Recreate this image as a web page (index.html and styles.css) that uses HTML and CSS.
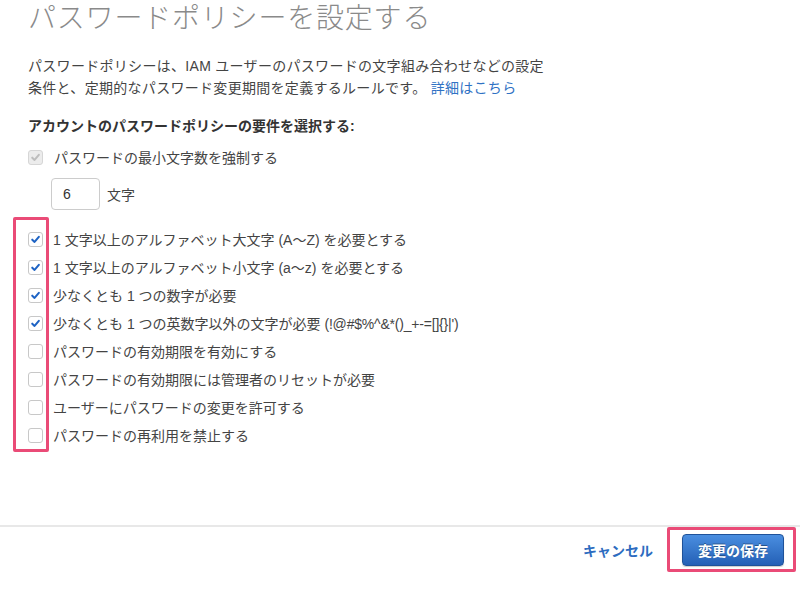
FILE: index.html
```html
<!DOCTYPE html>
<html lang="ja">
<head>
  <meta charset="UTF-8" />
  <title>パスワードポリシーを設定する</title>
  <link rel="stylesheet" href="styles.css">
</head>
<body>

  <div class="page">
    <h1>パスワードポリシーを設定する</h1>

    <p class="intro">パスワードポリシーは、IAM ユーザーのパスワードの文字組み合わせなどの設定<br>条件と、定期的なパスワード変更期間を定義するルールです。 <a href="#">詳細はこちら</a></p>

    <h2>アカウントのパスワードポリシーの要件を選択する:</h2>

    <label class="row">
      <span class="cb disabled"><svg viewBox="0 0 14 14"><path d="M3.5 7.2 L6 9.6 L10.6 4.2" /></svg></span>
      <span>パスワードの最小文字数を強制する</span>
    </label>

    <div class="minlen">
      <input type="text" value="6" />
      <span>文字</span>
    </div>

    <div class="options">
      <span class="mark"></span>
      <label class="row"><span class="cb on"><svg viewBox="0 0 14 14"><path d="M3.5 7.2 L6 9.6 L10.6 4.2" /></svg></span><span>1 文字以上のアルファベット大文字 (A〜Z) を必要とする</span></label>
      <label class="row"><span class="cb on"><svg viewBox="0 0 14 14"><path d="M3.5 7.2 L6 9.6 L10.6 4.2" /></svg></span><span>1 文字以上のアルファベット小文字 (a〜z) を必要とする</span></label>
      <label class="row"><span class="cb on"><svg viewBox="0 0 14 14"><path d="M3.5 7.2 L6 9.6 L10.6 4.2" /></svg></span><span>少なくとも 1 つの数字が必要</span></label>
      <label class="row"><span class="cb on"><svg viewBox="0 0 14 14"><path d="M3.5 7.2 L6 9.6 L10.6 4.2" /></svg></span><span>少なくとも 1 つの英数字以外の文字が必要 <span class="sym">(!@#$%^&amp;*()_+-=[]{}|')</span></span></label>
      <label class="row"><span class="cb"></span><span>パスワードの有効期限を有効にする</span></label>
      <label class="row"><span class="cb"></span><span>パスワードの有効期限には管理者のリセットが必要</span></label>
      <label class="row"><span class="cb"></span><span>ユーザーにパスワードの変更を許可する</span></label>
      <label class="row"><span class="cb"></span><span>パスワードの再利用を禁止する</span></label>
    </div>
  </div>

  <div class="footer">
    <a href="#" class="cancel">キャンセル</a>
    <span class="save-wrap">
      <span class="mark"></span>
      <button class="save">変更の保存</button>
    </span>
  </div>

</body>
</html>
```

FILE: styles.css
```css
html,body{margin:0;padding:0;background:#fff;}
body{font-family:"Liberation Sans","Noto Sans CJK JP",sans-serif;color:#444;font-size:14px;width:800px;height:596px;overflow:hidden;}
.page{padding-left:28px;}
h1{margin:0;font-size:28px;font-weight:300;color:#8a8a8a;line-height:38px;letter-spacing:0.8px;}
.intro{margin:17px 0 0;line-height:22px;letter-spacing:0.3px;}
.intro a{color:#2f72c4;text-decoration:none;}
h2{margin:16px 0 0;font-size:14px;font-weight:bold;line-height:22px;color:#333;}
.row{display:flex;align-items:center;height:28px;gap:11px;white-space:nowrap;}
h2 + .row{margin-top:6px;}
.cb{width:13px;height:13px;border:1px solid #c8c8c8;border-radius:3px;background:#fff;flex:none;display:flex;}
.cb svg{width:13px;height:13px;fill:none;stroke-width:2.2;stroke-linecap:round;stroke-linejoin:round;}
.cb.on svg{stroke:#1e63c4;}
.cb.disabled{background:#ececec;border-color:#d6d6d6;}
.cb.disabled svg{stroke:#bdbdbd;}
.sym{letter-spacing:-0.2px;}
.minlen{display:flex;align-items:center;gap:7px;margin:7px 0 0 23px;}
.minlen input{width:36px;height:30px;border:1px solid #ccc;border-radius:4px;padding:0 0 0 11px;font:inherit;color:#333;outline:none;}
.options{position:relative;margin-top:15px;}
.options .row{gap:10px;}
.options .mark{position:absolute;left:-15px;top:-8px;width:30px;bottom:-3px;border:3px solid #ea4b77;border-radius:2px;}
.footer{margin-top:76px;border-top:2px solid #e8e8e8;display:flex;align-items:center;justify-content:flex-end;padding:7px 16px 0 0;gap:29px;}
.cancel{color:#2d6cc0;font-weight:bold;text-decoration:none;font-size:14px;}
.save-wrap{position:relative;display:inline-flex;}
.save-wrap .mark{position:absolute;left:-15px;right:-12px;top:-7px;bottom:-6px;border:3px solid #ea4b77;border-radius:2px;}
.save{width:102px;height:32px;border:1px solid #1f5299;border-radius:4px;background:linear-gradient(#4a8ee0,#2460b6);color:#fff;font:inherit;font-weight:bold;font-size:14px;text-shadow:0 -1px 0 rgba(0,0,0,.35);box-shadow:0 1px 1px rgba(0,0,0,.2);padding:0;}
```
